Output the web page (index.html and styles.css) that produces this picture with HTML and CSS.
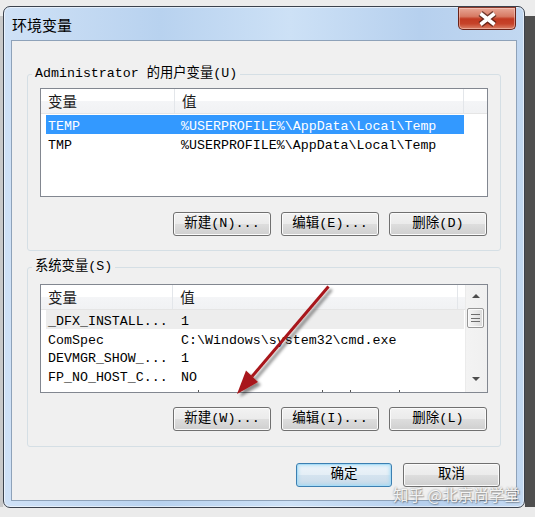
FILE: index.html
```html
<!DOCTYPE html>
<html lang="zh-CN">
<head>
<meta charset="utf-8">
<title>环境变量</title>
<link rel="stylesheet" href="styles.css">
</head>
<body>
<div class="window">
  <div class="titlebar">
    <span class="title">环境变量</span>
    <div class="close">
      <svg width="58" height="23" viewBox="0 0 58 23">
        <path d="M22.5 6.5 L36.5 17.5 M36.5 6.5 L22.5 17.5" stroke="#4a1c14" stroke-width="6.5" stroke-opacity="0.75" fill="none"/>
        <path d="M22.5 6.5 L36.5 17.5 M36.5 6.5 L22.5 17.5" stroke="#ffffff" stroke-width="3.6" fill="none"/>
      </svg>
    </div>
  </div>
  <div class="pane">
    <fieldset class="group group--user">
      <legend>Administrator 的用户变量(U)</legend>
      <div class="list">
        <div class="list-main">
          <div class="list-head">
            <div class="hcell c1">变量</div>
            <div class="hcell c2">值</div>
            <div class="hcell c3"></div>
          </div>
          <div class="rows">
            <div class="row row--sel"><span class="cell c1">TEMP</span><span class="cell c2">%USERPROFILE%\AppData\Local\Temp</span></div>
            <div class="row"><span class="cell c1">TMP</span><span class="cell c2">%USERPROFILE%\AppData\Local\Temp</span></div>
          </div>
        </div>
      </div>
      <div class="btnrow">
        <button class="btn">新建(N)...</button>
        <button class="btn">编辑(E)...</button>
        <button class="btn">删除(D)</button>
      </div>
    </fieldset>

    <fieldset class="group group--sys">
      <legend>系统变量(S)</legend>
      <div class="list">
        <div class="list-main">
          <div class="list-head">
            <div class="hcell c1">变量</div>
            <div class="hcell c2">值</div>
            <div class="hcell c3"></div>
          </div>
          <div class="rows rows--sys">
            <div class="row row--hot"><span class="cell c1">_DFX_INSTALL...</span><span class="cell c2">1</span></div>
            <div class="row"><span class="cell c1">ComSpec</span><span class="cell c2">C:\Windows\system32\cmd.exe</span></div>
            <div class="row"><span class="cell c1">DEVMGR_SHOW_...</span><span class="cell c2">1</span></div>
            <div class="row"><span class="cell c1">FP_NO_HOST_C...</span><span class="cell c2">NO</span></div>
            <div class="row row--cut"><span class="cell c1"></span><span class="cell c2"><i class="tick"></i><i class="tick tick--b"></i><i class="tick tick--c"></i><i class="tick tick--d"></i></span></div>
          </div>
        </div>
        <div class="scrollbar">
          <div class="sb-btn"><span class="tri tri--up"></span></div>
          <div class="sb-thumb"><span class="grip"></span></div>
          <div class="sb-track"></div>
          <div class="sb-btn"><span class="tri tri--down"></span></div>
        </div>
      </div>
      <div class="btnrow btnrow--sys">
        <button class="btn">新建(W)...</button>
        <button class="btn">编辑(I)...</button>
        <button class="btn">删除(L)</button>
      </div>
    </fieldset>

    <div class="btnrow btnrow--dialog">
      <button class="btn btn--default btn--ok">确定</button>
      <button class="btn btn--cancel">取消</button>
    </div>
  </div>
</div>

<svg class="annot" width="535" height="517" viewBox="0 0 535 517">
  <defs>
    <filter id="sh" x="-20%" y="-20%" width="140%" height="140%">
      <feDropShadow dx="3" dy="3" stdDeviation="1.6" flood-color="#000" flood-opacity="0.45"/>
    </filter>
  </defs>
  <g filter="url(#sh)">
    <path d="M328.5 286.5 L252 376.5" stroke="#a8171a" stroke-width="3" fill="none"/>
    <polygon points="237,394 258,382 246,370.5" fill="#a8171a"/>
  </g>
</svg>

<div class="watermark">知乎 @北京尚学堂</div>
</body>
</html>
```

FILE: styles.css
```css
* {
  box-sizing: border-box;
}

html,
body {
  margin: 0;
  padding: 0;
}

body {
  width: 535px;
  height: 517px;
  overflow: hidden;
  position: relative;
  font-family: "Liberation Mono", "Noto Sans CJK SC", monospace;
  font-size: 13.3px;
  color: #000;
  background:
    linear-gradient(#ececec, #ececec) 0 0 / 100% 16px no-repeat,
    linear-gradient(#ebebeb, #ebebeb) 0 100% / 100% 10px no-repeat,
    linear-gradient(to right, #c9c9c9 0 3px, #e4e4e4 3px 525px, #4f4f4f 525px);
}

.window {
  margin: 6px 0 0 3px;
  width: 522px;
  height: 502px;
  border: 1px solid #3b424d;
  border-radius: 7px;
  padding: 0 7px 6px;
  display: flex;
  flex-direction: column;
  background: linear-gradient(to right, #cfe1f6 0%, #b8d2ef 30%, #cde1f6 55%, #b6d0ee 80%, #c2d8f1 100%);
  box-shadow: inset 0 0 0 1px rgba(255, 255, 255, 0.55);
}

.titlebar {
  height: 33px;
  display: flex;
  justify-content: space-between;
  align-items: flex-start;
}

.title {
  font-family: "Noto Sans CJK SC", sans-serif;
  font-size: 15px;
  line-height: 20px;
  padding: 8px 0 0 1px;
  color: #000;
}

.close {
  width: 58px;
  height: 23px;
  margin-right: 1px;
  border: 1px solid #6a2318;
  border-top-color: #8a3a2c;
  border-radius: 0 0 5px 5px;
  background: linear-gradient(#e8a796 0%, #d77a64 40%, #c23a22 52%, #c6432a 75%, #db8167 100%);
  box-shadow: inset 0 0 0 1px rgba(255, 220, 210, 0.45);
  overflow: hidden;
}

.close svg {
  display: block;
  margin: -1px 0 0 -1px;
}

.pane {
  flex: 1;
  background: #f0f0f0;
  border: 1px solid #8ea2b9;
  padding: 25px 15px 0;
  display: flex;
  flex-direction: column;
}

.group {
  margin: 0;
  min-width: 0;
  border: 1px solid #d5dfe5;
  border-radius: 3px;
  padding: 6px 12px 14px;
}

.group legend {
  padding: 0 3px;
  margin-left: -8px;
  height: 16px;
  line-height: 16px;
  font-size: 13.3px;
}

.group--sys {
  margin-top: 8px;
  padding-top: 9px;
  padding-bottom: 15px;
}

.list {
  height: 109px;
  border: 1px solid #828790;
  background: #fff;
  display: flex;
  overflow: hidden;
}

.list-main {
  flex: 1;
  min-width: 0;
  display: flex;
  flex-direction: column;
}

.list-head {
  height: 25px;
  flex: none;
  display: flex;
  border-bottom: 1px solid #e5e5e5;
  background: linear-gradient(#ffffff 0%, #ffffff 50%, #f4f5f7 51%, #f1f2f4 100%);
}

.hcell {
  height: 100%;
  font-family: "Noto Sans CJK SC", sans-serif;
  font-size: 14.5px;
  line-height: 24px;
  padding-left: 7px;
  color: #1a1a1a;
  border-right: 1px solid #e3e6ea;
}

.hcell.c1 {
  width: 134px;
}

.hcell.c2 {
  width: 289px;
}

.hcell.c3 {
  flex: 1;
  border-right: none;
}

.rows {
  padding: 1px 0 0 5px;
}

.rows--sys {
  padding-top: 0;
}

.row {
  display: flex;
  width: 418px;
  height: 19px;
  line-height: 19px;
  white-space: nowrap;
}

.rows--sys .row {
  height: 18.7px;
  line-height: 18.7px;
}

.cell {
  display: block;
  overflow: hidden;
  padding-top: 2px;
}

.rows--sys .cell {
  padding-top: 3px;
}

.cell.c1 {
  width: 129px;
  padding-left: 2px;
}

.cell.c2 {
  width: 289px;
  padding-left: 6px;
}

.row--sel {
  background: #3399ff;
  color: #fff;
}

.row--hot {
  background: #ededed;
}

.row--cut .cell.c2 {
  position: relative;
}

.tick {
  position: absolute;
  top: 5px;
  left: 23px;
  width: 1px;
  height: 2px;
  background: #555;
}

.tick--b {
  left: 147px;
}

.tick--c {
  left: 175px;
}

.tick--d {
  left: 224px;
}

.scrollbar {
  width: 22px;
  flex: none;
  display: flex;
  flex-direction: column;
  padding: 0 3px 2px 2px;
  background: linear-gradient(to right, #ebebeb 0 1px, #f3f3f3 1px, #f0f0f0 100%);
}

.sb-btn {
  height: 22px;
  display: flex;
  align-items: center;
  justify-content: center;
}

.tri {
  width: 0;
  height: 0;
  border-left: 4px solid transparent;
  border-right: 4px solid transparent;
}

.tri--up {
  border-bottom: 4px solid #4d4d4d;
}

.tri--down {
  border-top: 4px solid #4d4d4d;
}

.sb-thumb {
  height: 20px;
  margin-top: 1px;
  border: 1px solid #979797;
  border-radius: 2px;
  background: linear-gradient(to right, #f6f6f6, #e6e6e6 60%, #dadada);
  display: flex;
  align-items: center;
  justify-content: center;
  box-shadow: inset 0 0 0 1px #fbfbfb;
}

.grip {
  width: 9px;
  height: 8px;
  background: repeating-linear-gradient(#6e6e6e 0 1px, transparent 1px 3.5px);
}

.sb-track {
  flex: 1;
}

.btnrow {
  display: flex;
  justify-content: flex-end;
  gap: 10px;
  margin: 15px 1px 0 0;
}

.btnrow--sys {
  margin-top: 14px;
}

.btnrow--dialog {
  gap: 11px;
  margin-top: 16px;
}

.btn {
  width: 98px;
  height: 24px;
  padding: 0;
  border: 1px solid #707070;
  border-radius: 3px;
  background: linear-gradient(#f2f2f2 0%, #ebebeb 48%, #dddddd 52%, #cfcfcf 100%);
  box-shadow: inset 0 0 0 1px #fbfbfb;
  font-family: "Liberation Mono", "Noto Sans CJK SC", monospace;
  font-size: 13.5px;
  line-height: 22px;
  color: #000;
  white-space: nowrap;
}

.btn--ok {
  width: 96px;
}

.btn--cancel {
  width: 97px;
}

.btn--default {
  border-color: #3c7fb1;
  background: linear-gradient(#eef5fa 0%, #e4eef6 48%, #d4e3ef 52%, #c9dbe9 100%);
  box-shadow: inset 0 0 0 1px #a9dcf6, inset 0 0 3px 2px rgba(150, 215, 245, 0.55);
}

.annot {
  position: absolute;
  left: 0;
  top: 0;
  pointer-events: none;
}

.watermark {
  position: absolute;
  left: 393px;
  top: 484px;
  font-family: "Noto Sans CJK SC", sans-serif;
  font-size: 15.5px;
  line-height: 20px;
  color: rgba(255, 255, 255, 0.88);
  text-shadow: 0 0 2px rgba(60, 60, 60, 0.6), 1px 1px 1px rgba(0, 0, 0, 0.25);
  white-space: nowrap;
  pointer-events: none;
}
```
